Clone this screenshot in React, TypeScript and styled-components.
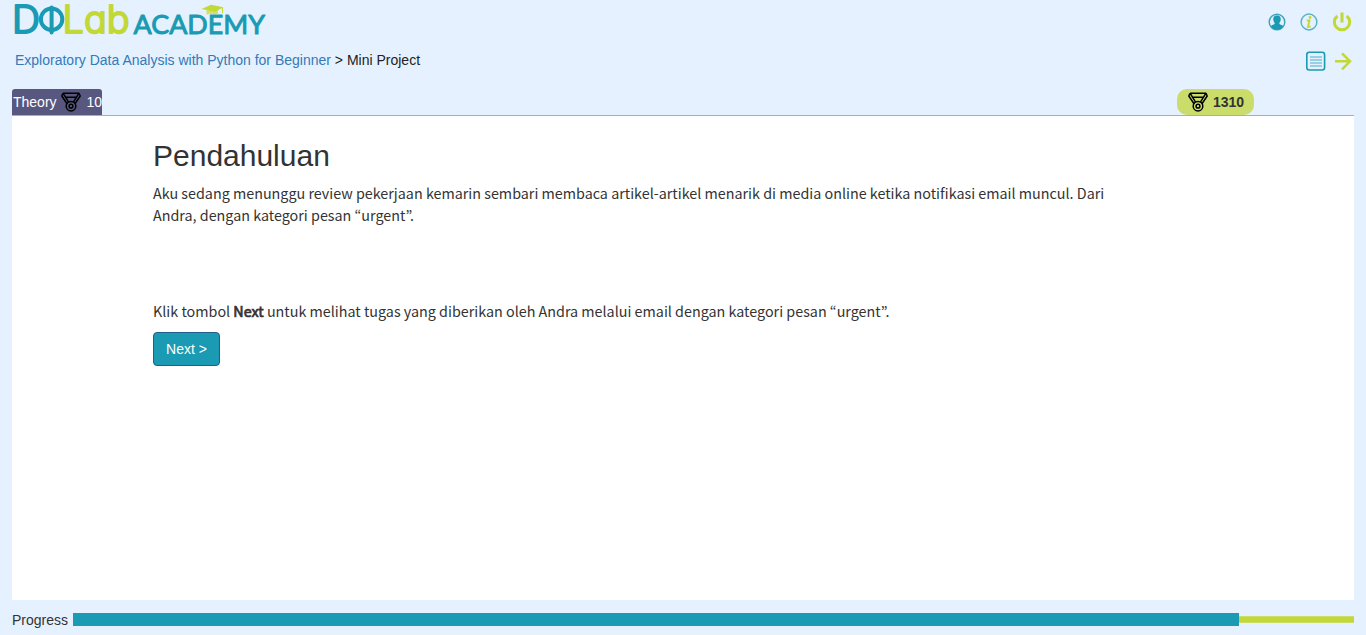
import React from 'react';
import styled, { createGlobalStyle } from 'styled-components';

const teal = '#1a9ab3';
const lime = '#c1d836';

const GlobalStyle = createGlobalStyle`
  * { box-sizing: border-box; }
  body {
    margin: 0;
    background: #e5f1ff;
    color: #333;
    font-family: "Liberation Sans", Arial, sans-serif;
    font-size: 14px;
    line-height: 20px;
  }
`;

const Page = styled.div`
  height: 635px;
  display: flex;
  flex-direction: column;
  overflow: hidden;
  padding: 0 12px;
`;

const Header = styled.header`
  height: 43px;
  flex: none;
  display: flex;
  justify-content: space-between;
  padding: 0 2px 0 0;
`;

const HeaderIcons = styled.nav`
  display: flex;
  align-items: center;
  gap: 14px;
  svg { display: block; }
`;

const SubHeader = styled.div`
  height: 46px;
  flex: none;
  display: flex;
  justify-content: space-between;
  padding: 7px 2px 0 3px;
`;

const Breadcrumb = styled.div`
  color: #222;
  a { color: #337ab7; text-decoration: none; }
`;

const PageIcons = styled.nav`
  display: flex;
  gap: 9px;
  padding-top: 1px;
`;

const TabBar = styled.div`
  height: 27px;
  flex: none;
  display: flex;
  justify-content: space-between;
  border-bottom: 1px solid #a9aac6;
`;

const Tab = styled.div`
  width: 90px;
  height: 26px;
  display: flex;
  align-items: center;
  padding-left: 1px;
  background: #57577f;
  color: #fff;
  border-radius: 3px 3px 0 0;
  svg { margin: 0 6px 0 4px; flex: none; }
`;

const Score = styled.div`
  width: 77px;
  height: 26px;
  margin-right: 100px;
  display: flex;
  align-items: center;
  padding-left: 11px;
  gap: 5px;
  background: #cadc69;
  border-radius: 10px;
  font-weight: bold;
`;

const Content = styled.main`
  flex: 1;
  background: #fff;
  padding: 20px 0 0 141px;
`;

const Title = styled.h1`
  margin: 0;
  font-size: 30px;
  line-height: 40px;
  font-weight: 400;
`;

const Paragraph = styled.p<{ $top: number }>`
  margin: ${(p) => p.$top}px 0 0;
  width: 980px;
  font-family: "Noto Sans CJK JP", "Noto Sans", sans-serif;
  font-size: 14.335px;
  line-height: 22px;
`;

const Strong = styled.strong`
  font-weight: 400;
  -webkit-text-stroke: 0.7px #333;
`;

const NextButton = styled.button`
  display: block;
  margin-top: 10px;
  width: 67px;
  height: 34px;
  padding: 0;
  border: 1px solid #205f8a;
  border-radius: 4px;
  background: ${teal};
  color: #fff;
  font: 14px/20px "Liberation Sans", Arial, sans-serif;
`;

const Footer = styled.footer`
  height: 35px;
  flex: none;
  display: flex;
  align-items: center;
  padding-top: 4px;
`;

const ProgressLabel = styled.span`
  width: 61px;
`;

const ProgressDone = styled.div`
  width: 1166px;
  height: 13px;
  background: ${teal};
`;

const ProgressRest = styled.div`
  flex: 1;
  height: 7px;
  background: ${lime};
  border: solid #cbdc68;
  border-width: 1px 0;
`;

const LogoSvg = styled.svg`
  display: block;
  text { font-family: Lato, sans-serif; }
  .lab {
    font-family: Inter, sans-serif;
    font-weight: 300;
    font-feature-settings: "cv11";
  }
`;

const Logo = () => (
  <LogoSvg width="268" height="42" viewBox="0 0 268 42" strokeLinejoin="round">
    <g fontSize="37.500" strokeWidth="2">
      <text className="lab" x="0" y="33.300" fill={teal} stroke={teal} textLength="28" lengthAdjust="spacingAndGlyphs">D</text>
      <g fill="none" stroke={teal} strokeWidth="4">
        <circle cx="39.600" cy="19.200" r="10.700" />
        <path d="M39.600 7.500v25" strokeLinecap="round" />
      </g>
      <text className="lab" x="50.500" y="33.300" fill={lime} stroke={lime} textLength="67" lengthAdjust="spacingAndGlyphs">Lab</text>
    </g>
    <text x="121.500" y="33.800" fontSize="27.500" fill={teal} stroke={teal} strokeWidth="1" textLength="131.500" lengthAdjust="spacingAndGlyphs">ACADEMY</text>
    <path d="M194.500 9.500v5.300q6-2 11.500 0V9.500z" fill="#d0e168" />
    <path d="M189.500 9l9.500-4.200 12.500 2.400-8.500 4.600z" fill={lime} />
    <path d="M210.500 7.500v5.500" stroke={lime} strokeWidth="1" />
  </LogoSvg>
);

const Medal = () => (
  <svg width="20" height="20" viewBox="0 0 20 20" fill="none" stroke="#000" strokeWidth="1.500" strokeLinejoin="round">
    <path d="M2 1.200h16L19.200 4l-5.400 8M2 1.200L.8 4l5.400 8M2 1.200l5.600 9M18 1.200l-5.600 9M4.500 5.200h11" />
    <circle cx="10" cy="14.200" r="4.800" />
    <circle cx="10" cy="14.200" r="1.900" />
  </svg>
);

const UserIcon = () => (
  <svg width="18" height="18" viewBox="0 0 18 18">
    <circle cx="9" cy="9" r="7.800" fill="none" stroke="#3ca5bd" strokeWidth="1.500" />
    <path d="M9 2.500c-3 0-4 2-3.700 4.300.2 1.800.9 2.500 1.500 3.500-.3 1.500-3 1.500-4 3 2.800 4.500 9.600 4.500 12.400 0-1-1.500-3.700-1.500-4-3 .6-1 1.300-1.700 1.500-3.500C13 4.500 12 2.500 9 2.500z" fill={teal} />
  </svg>
);

const InfoIcon = () => (
  <svg width="18" height="18" viewBox="0 0 18 18" fill="none">
    <circle cx="9" cy="9" r="7.900" stroke="#5db2c6" strokeWidth="1.500" />
    <circle cx="10" cy="4.500" r="1.400" fill={lime} />
    <path d="M6.800 7.600h2.600L8 13.800h2.600" stroke={lime} strokeWidth="2" />
  </svg>
);

const PowerIcon = () => (
  <svg width="20" height="20" viewBox="0 0 20 20" fill="none" stroke={lime} strokeWidth="3">
    <path d="M5.400 4a7.700 7.700 0 1 0 9.200 0M10 .5v10" />
  </svg>
);

const ListIcon = () => (
  <svg width="20" height="20" viewBox="0 0 20 20" fill="none" stroke={teal}>
    <rect x=".8" y="1.200" width="17.800" height="17.800" rx="2.500" strokeWidth="1.600" />
    <path d="M4 6h12M4 9h12M4 12h12M4 15h12" strokeWidth="1.200" strokeOpacity=".75" />
  </svg>
);

const ArrowIcon = () => (
  <svg width="17" height="20" viewBox="0 0 17 20" fill="none" stroke={lime} strokeWidth="2.600">
    <path d="M0 10.300h15M7 2.300l8 8-8 8" />
  </svg>
);

export default function App() {
  return (
    <Page>
      <GlobalStyle />
      <Header>
        <Logo />
        <HeaderIcons>
          <UserIcon />
          <InfoIcon />
          <PowerIcon />
        </HeaderIcons>
      </Header>
      <SubHeader>
        <Breadcrumb>
          <a>Exploratory Data Analysis with Python for Beginner</a> &gt; Mini Project
        </Breadcrumb>
        <PageIcons>
          <ListIcon />
          <ArrowIcon />
        </PageIcons>
      </SubHeader>
      <TabBar>
        <Tab>Theory<Medal />10</Tab>
        <Score><Medal />1310</Score>
      </TabBar>
      <Content>
        <Title>Pendahuluan</Title>
        <Paragraph $top={6}>
          Aku sedang menunggu review pekerjaan kemarin sembari membaca artikel-artikel menarik di media online ketika
          notifikasi email muncul. Dari Andra, dengan kategori pesan “urgent”.
        </Paragraph>
        <Paragraph $top={74}>
          Klik tombol <Strong>Next</Strong> untuk melihat tugas yang diberikan oleh Andra melalui email dengan kategori
          pesan “urgent”.
        </Paragraph>
        <NextButton>Next &gt;</NextButton>
      </Content>
      <Footer>
        <ProgressLabel>Progress</ProgressLabel>
        <ProgressDone />
        <ProgressRest />
      </Footer>
    </Page>
  );
}
